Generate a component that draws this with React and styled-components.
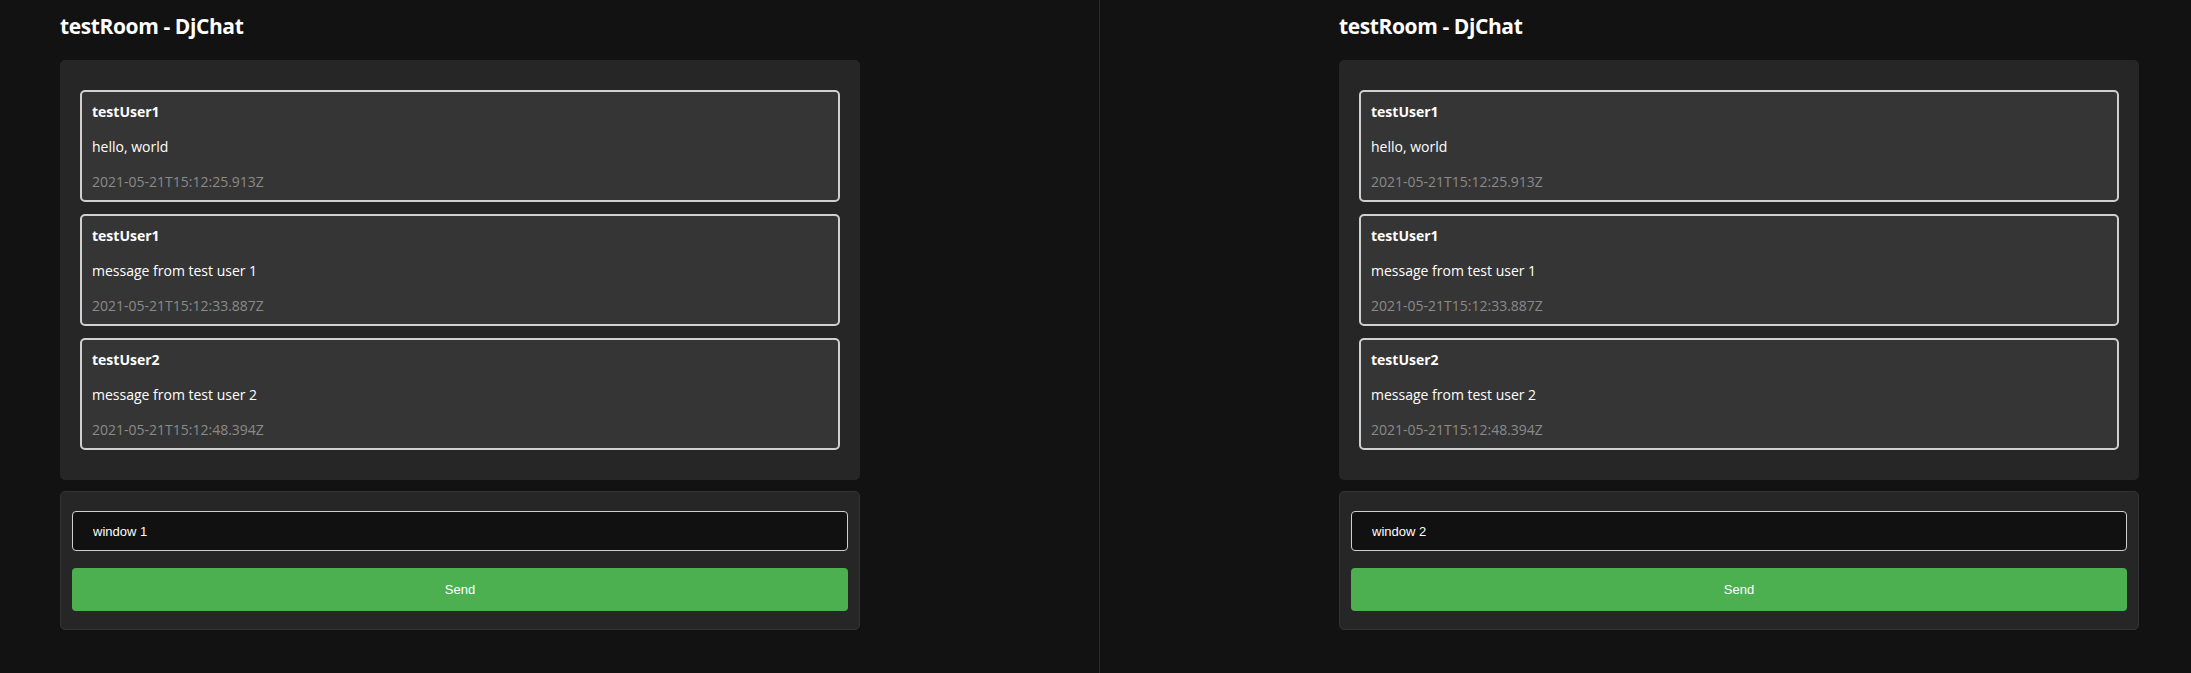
import styled, { createGlobalStyle } from 'styled-components';

const GlobalStyle = createGlobalStyle`
  html, body {
    margin: 0;
    padding: 0;
    background: #121212;
    color: #fff;
    font-family: "Open Sans", "Noto Sans", sans-serif;
  }
`;

const MESSAGES = [
  { id: 1, user: 'testUser1', text: 'hello, world', time: '2021-05-21T15:12:25.913Z' },
  { id: 2, user: 'testUser1', text: 'message from test user 1', time: '2021-05-21T15:12:33.887Z' },
  { id: 3, user: 'testUser2', text: 'message from test user 2', time: '2021-05-21T15:12:48.394Z' },
];

const Screen = styled.div`
  display: flex;
  height: 673px;
  background: #121212;
`;

const Window = styled.div`
  box-sizing: border-box;
  width: ${(p) => (p.$width ? `${p.$width}px` : 'auto')};
  flex: ${(p) => (p.$width ? '0 0 auto' : '1')};
  padding-left: ${(p) => p.$offset}px;
  border-right: ${(p) => (p.$divider ? '1px solid #2a2a2a' : 'none')};
`;

const Room = styled.div`
  width: 800px;
  display: flex;
  flex-direction: column;
`;

const Title = styled.h1`
  margin: 0;
  padding-top: 12px;
  margin-bottom: 20px;
  font-size: 21px;
  font-weight: 700;
  letter-spacing: -0.4px;
  line-height: normal;
  color: #fff;
`;

const Log = styled.div`
  background: #262626;
  border-radius: 5px;
  padding: 30px 20px;
  display: flex;
  flex-direction: column;
  gap: 12px;
`;

const Message = styled.div`
  background: #353535;
  border: 2px solid #d0d0d0;
  border-radius: 5px;
  padding: 10px 10px 8px;
  display: flex;
  flex-direction: column;
  gap: 15px;
  font-size: 14px;
  line-height: 20px;
`;

const Author = styled.strong`
  font-weight: 700;
  color: #fff;
`;

const Body = styled.span`
  color: #fff;
`;

const Stamp = styled.span`
  color: #8a8a8a;
`;

const Composer = styled.form`
  margin: 11px 0 0;
  background: #262626;
  border: 1px solid #333;
  border-radius: 5px;
  padding: 19px 11px 18px;
  display: flex;
  flex-direction: column;
  gap: 17px;
`;

const Input = styled.input`
  box-sizing: border-box;
  height: 40px;
  width: 100%;
  background: #111;
  border: 1px solid #cfcfcf;
  border-radius: 4px;
  padding: 0 20px;
  color: #fff;
  font-family: "Liberation Sans", Arial, sans-serif;
  font-size: 13px;
  outline: none;
`;

const SendButton = styled.button`
  height: 43px;
  width: 100%;
  background: #4caf50;
  border: none;
  border-radius: 4px;
  color: #fff;
  font-family: "Liberation Sans", Arial, sans-serif;
  font-size: 13px;
  cursor: pointer;
`;

function ChatRoom({ draft }) {
  return (
    <Room>
      <Title>testRoom - DjChat</Title>
      <Log>
        {MESSAGES.map((m) => (
          <Message key={m.id}>
            <Author>{m.user}</Author>
            <Body>{m.text}</Body>
            <Stamp>{m.time}</Stamp>
          </Message>
        ))}
      </Log>
      <Composer onSubmit={(e) => e.preventDefault()}>
        <Input defaultValue={draft} />
        <SendButton type="submit">Send</SendButton>
      </Composer>
    </Room>
  );
}

export default function App() {
  return (
    <>
      <GlobalStyle />
      <Screen>
        <Window $width={1100} $offset={60} $divider>
          <ChatRoom draft="window 1" />
        </Window>
        <Window $offset={239}>
          <ChatRoom draft="window 2" />
        </Window>
      </Screen>
    </>
  );
}
